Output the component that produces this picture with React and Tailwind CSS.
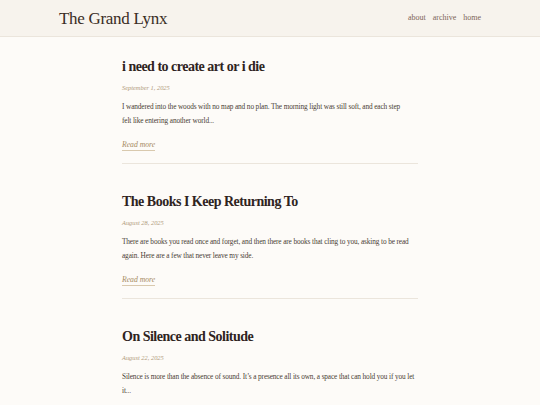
import React from 'react';

const posts = [
  {
    title: 'i need to create art or i die',
    date: 'September 1, 2025',
    excerpt:
      'I wandered into the woods with no map and no plan. The morning light was still soft, and each step felt\u00a0like entering another world...',
  },
  {
    title: 'The Books I Keep Returning To',
    date: 'August 28, 2025',
    excerpt:
      'There are books you read once and forget, and then there are books that cling to you, asking to be read again. Here are a few that never leave my side.',
  },
  {
    title: 'On Silence and Solitude',
    date: 'August 22, 2025',
    excerpt:
      "Silence is more than the absence of sound. It\u2019s a presence all its own, a space that can hold you if you let it...",
  },
];

export default function App() {
  return (
    <div className="min-h-screen bg-[#fdfbf8] text-[#3b2f28] font-['Liberation_Serif',serif]">
      <header className="bg-[#f7f3ed] border-b border-[#ebe5dc]">
        <div className="w-[422px] mx-auto h-[36px] flex items-center justify-between">
          <h1 className="text-[17px] leading-none tracking-[-0.3px] text-[#3a2d25]">The Grand Lynx</h1>
          <nav className="flex gap-[7px] text-[8px] text-[#7d6557]">
            <a>about</a>
            <a>archive</a>
            <a>home</a>
          </nav>
        </div>
      </header>

      <main className="w-[296px] mx-auto pt-[20px]">
        {posts.map((p, i) => (
          <article
            key={i}
            className={i < posts.length - 1 ? 'pb-[9px] mb-[28px] border-b border-[#ebe5dc]' : ''}
          >
            <h2 className="text-[14px] leading-[20px] font-bold tracking-[-0.5px] text-[#2f241e]">{p.title}</h2>
            <p className="text-[6.4px] leading-[8px] italic text-[#b09a7a] mt-[7px]">{p.date}</p>
            <p className="text-[7.3px] leading-[14px] tracking-[-0.12px] text-[#4a3d34] mt-[8px]">{p.excerpt}</p>
            {i < posts.length - 1 && (
              <a className="inline-block mt-[11px] text-[7.7px] italic text-[#a58a62] border-b border-[#d9c9ae] leading-[11px]">
                Read more
              </a>
            )}
          </article>
        ))}
      </main>
    </div>
  );
}
